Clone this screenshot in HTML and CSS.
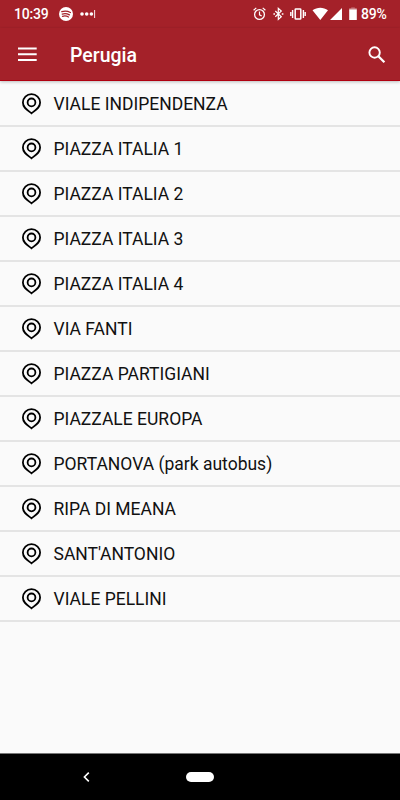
FILE: index.html
```html
<!DOCTYPE html>
<html lang="it">
<head>
<meta charset="utf-8">
<title>Perugia</title>
<link rel="stylesheet" href="styles.css">
</head>
<body>
<svg width="0" height="0" class="defs">
  <symbol id="pin" viewBox="0 0 20 22">
    <path d="M9.500 20.300C5.300 17 .9 14.600 .9 9.500a8.600 8.400 0 0 1 17.200 0c0 5.100-4.400 7.500-8.600 10.800z"/>
    <circle cx="9.500" cy="9.400" r="3.900"/>
  </symbol>
</svg>
<div class="status">
  <span class="clock">10:39</span>
  <svg class="spotify" width="14" height="14" viewBox="0 0 14 14"><circle cx="7" cy="7" r="7" fill="#fff"/><path d="M2.800 4.700c3-.9 6-.6 8.600.8M3.200 7.100c2.600-.8 5-.5 7.200.8M3.500 9.300c2.200-.6 4.200-.4 6 .7" fill="none" stroke="#a42129" stroke-width="1.250" stroke-linecap="round"/></svg>
  <svg class="more" width="16" height="8" viewBox="0 0 16 8"><g fill="#fff"><circle cx="2" cy="4" r="1.800"/><circle cx="6.700" cy="4" r="1.800"/><circle cx="11.400" cy="4" r="1.800"/><path d="M14.200 0h.9v8h-.9z"/></g></svg>
  <svg class="system" width="121" height="16" viewBox="0 0 121 16" fill="none" stroke="#fff">
    <circle cx="19.500" cy="8.500" r="4.900" stroke-width="1.300"/><path d="M19.500 5.500v3.300l2.200 1.300M13.600 4.200l2.700-2.300M22.700 1.900l2.700 2.300" stroke-width="1.200"/>
    <path d="M35.300 5l6 5.800-3 2.700V2.300l3 2.700-6 5.800" stroke-width="1.200"/><path d="M33.400 7.200h1.600v1.600h-1.600zM41.800 7.200h1.600v1.600h-1.600z" fill="#fff" stroke="none"/>
    <rect x="55.200" y="3" width="5.600" height="10" rx=".6" stroke-width="1.500"/><path d="M52.600 4v8M50.800 6v4M63.400 4v8M65.200 6v4" stroke-width="1.400"/>
    <path d="M72.500 4.300C77 .9 83.500 .9 88 4.300L80.300 14zM102 2v12H90z" fill="#fff" stroke="none"/>
    <path d="M109.200 2.200h2V1.500h3.600v.7h2v2h-7.600z" fill="#fff" fill-opacity=".4" stroke="none"/><path d="M109.200 3.500h7.600V14h-7.600z" fill="#fff" stroke="none"/>
  </svg>
  <span class="level">89%</span>
</div>
<header class="bar">
  <svg class="menu" width="20" height="15" viewBox="0 0 20 15"><path d="M0 1.500h18.700M0 7.300h18.700M0 13.100h18.700" stroke="#fff" stroke-width="2"/></svg>
  <h1>Perugia</h1>
  <svg class="search" width="18" height="18" viewBox="0 0 18 18" fill="none" stroke="#fff"><circle cx="6.600" cy="6.500" r="5.200" stroke-width="1.900"/><path d="M10.600 10.500l5.800 5.800" stroke-width="2.300"/></svg>
</header>
<ul class="stops">
  <li><svg><use href="#pin"/></svg><span>VIALE INDIPENDENZA</span></li>
  <li><svg><use href="#pin"/></svg><span>PIAZZA ITALIA 1</span></li>
  <li><svg><use href="#pin"/></svg><span>PIAZZA ITALIA 2</span></li>
  <li><svg><use href="#pin"/></svg><span>PIAZZA ITALIA 3</span></li>
  <li><svg><use href="#pin"/></svg><span>PIAZZA ITALIA 4</span></li>
  <li><svg><use href="#pin"/></svg><span>VIA FANTI</span></li>
  <li><svg><use href="#pin"/></svg><span>PIAZZA PARTIGIANI</span></li>
  <li><svg><use href="#pin"/></svg><span>PIAZZALE EUROPA</span></li>
  <li><svg><use href="#pin"/></svg><span>PORTANOVA (park autobus)</span></li>
  <li><svg><use href="#pin"/></svg><span>RIPA DI MEANA</span></li>
  <li><svg><use href="#pin"/></svg><span>SANT'ANTONIO</span></li>
  <li><svg><use href="#pin"/></svg><span>VIALE PELLINI</span></li>
</ul>
<nav class="navbar">
  <svg class="back" width="8" height="12" viewBox="0 0 8 12"><path d="M6.800 1.600L2.400 6l4.400 4.400" fill="none" stroke="#fff" stroke-width="1.600"/></svg>
  <div class="home"></div>
</nav>
</body>
</html>
```
FILE: styles.css
```css
* { box-sizing: border-box; }
body {
  margin: 0;
  height: 800px;
  display: flex;
  flex-direction: column;
  overflow: hidden;
  background: #fafafa;
  color: #000;
  font-family: Roboto, "Liberation Sans", sans-serif;
}
.defs { position: absolute; }
.status {
  height: 28px;
  flex: none;
  display: flex;
  align-items: center;
  padding-left: 14px;
  background: #a42129;
  color: #fff;
  font-size: 14px;
  font-weight: 500;
}
.clock { width: 45px; letter-spacing: -.2px; }
.more { margin-left: 7px; }
.system { margin-left: auto; }
.level { width: 39px; letter-spacing: -.2px; }
.bar {
  height: 53px;
  flex: none;
  display: flex;
  align-items: center;
  padding: 0 14px 0 18px;
  background: #a42129;
  border-bottom: 1px solid #b00010;
  box-shadow: 0 1px 3px rgba(0, 0, 0, .25);
  color: #fff;
}
.bar h1 { margin: 4px 0 0 32px; font-size: 19.500px; font-weight: 500; line-height: 24px; }
.search { margin: 1px 0 0 auto; }
.stops {
  flex: 1;
  margin: 0;
  padding: 1px 0 0;
  list-style: none;
}
.stops li {
  height: 45px;
  display: flex;
  align-items: center;
  padding-left: 22px;
  border-bottom: 2px solid #e4e4e4;
  color: #111;
  font-size: 17.500px;
  line-height: 20px;
}
.stops svg {
  width: 20px;
  height: 22px;
  margin-right: 11.500px;
  fill: none;
  stroke: #000;
  stroke-width: 1.800;
}
.navbar {
  height: 47px;
  flex: none;
  display: flex;
  align-items: center;
  padding-left: 82px;
  border-top: 1px solid #777;
  background: #000;
}
.home { width: 28px; height: 10px; margin-left: 96px; border-radius: 5px; background: #fff; }
```
